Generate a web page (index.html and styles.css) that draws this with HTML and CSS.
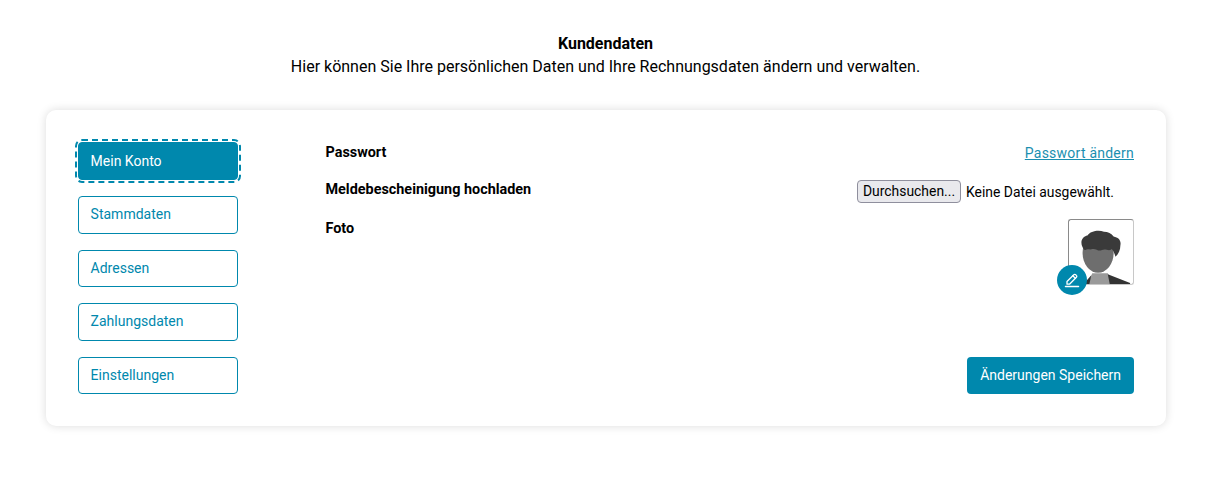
FILE: index.html
```html
<!DOCTYPE html>
<html lang="de">
<head>
<meta charset="utf-8">
<title>Kundendaten</title>
<link rel="stylesheet" href="styles.css">
</head>
<body>
<header class="intro">
  <h1 class="intro-title">Kundendaten</h1>
  <p class="intro-text">Hier können Sie Ihre persönlichen Daten und Ihre Rechnungsdaten ändern und verwalten.</p>
</header>
<main class="card">
  <nav class="side">
    <a class="side-item active" href="#">Mein Konto</a>
    <a class="side-item" href="#">Stammdaten</a>
    <a class="side-item" href="#">Adressen</a>
    <a class="side-item" href="#">Zahlungsdaten</a>
    <a class="side-item" href="#">Einstellungen</a>
  </nav>
  <section class="content">
    <div class="rows">
      <div class="row row-pass">
        <span class="label">Passwort</span>
        <a class="link" href="#">Passwort ändern</a>
      </div>
      <div class="row row-file">
        <span class="label">Meldebescheinigung hochladen</span>
        <div class="file">
          <button class="file-btn" type="button">Durchsuchen...</button>
          <span class="file-text">Keine Datei ausgewählt.</span>
        </div>
      </div>
      <div class="row row-photo">
        <span class="label">Foto</span>
        <div class="avatar">
          <svg class="avatar-img" viewBox="0 0 66 66" width="66" height="66" aria-hidden="true">
            <g class="avatar-art">
              <path d="M19 66 L24 55 H40 L44 66 Z" fill="#9a9a9a"/>
              <path d="M15 66 L23 57 L21 66 Z M42 66 L40 56 L63 65 L63 66 Z" fill="#333"/>
              <ellipse cx="30" cy="34" rx="16" ry="20.500" fill="#6e6e6e"/>
              <path d="M14 28 C11 22 14 17 19 16 C22 11 31 10 36 12 C40 12 44 14 46 17 C51 18 54 21 53 26 C53 31 51 35 48 38 C47 35 46 32 44 30 C41 33 38 29 34 31 C30 33 28 29 24 30 C21 31 19 29 17 31 C16 31 15 30 14 28 Z" fill="#3a3a3a"/>
            </g>
          </svg>
          <span class="avatar-edit">
            <svg viewBox="0 0 16 16" width="16" height="16" fill="none" stroke="#fff" stroke-width="1.300" stroke-linejoin="round" stroke-linecap="round" aria-hidden="true">
              <path d="M3 9.500 L9.800 2.700 a1.300 1.300 0 0 1 1.900 0 l0.700 0.700 a1.300 1.300 0 0 1 0 1.900 L5.500 12.200 H3 Z"/>
              <path d="M8.800 3.800 L11.300 6.300"/>
              <path d="M1.500 14.500 H14.500" stroke-width="1.500"/>
            </svg>
          </span>
        </div>
      </div>
    </div>
    <div class="actions">
      <button class="save" type="button">Änderungen Speichern</button>
    </div>
  </section>
</main>
</body>
</html>
```
FILE: styles.css
```css
* { box-sizing: border-box; }
html, body { margin: 0; padding: 0; }
body {
  width: 1217px;
  height: 483px;
  overflow: hidden;
  background: #fff;
  color: #000;
  font-family: Roboto, "Liberation Sans", sans-serif;
  font-size: 16px;
  line-height: 24px;
}
.intro {
  padding-top: 32px;
  text-align: center;
  height: 110px;
  padding-right: 6px;
}
.intro-title { margin: 0; font-size: 16px; font-weight: 700; line-height: 23px; }
.intro-text { margin: 0; font-size: 16px; line-height: 23px; }
.card {
  width: 1120px;
  height: 316.4px;
  margin-left: 46px;
  padding: 32.400px 32px 32px;
  display: flex;
  background: #fff;
  border-radius: 10px;
  box-shadow: 0 0 10px rgba(0, 0, 0, 0.14);
}
.side {
  width: 160px;
  flex: none;
  display: flex;
  flex-direction: column;
  gap: 16px;
}
.side-item {
  height: 37.6px;
  display: flex;
  align-items: center;
  padding: 0 11.600px 1px;
  border: 1px solid #0088ad;
  border-radius: 4px;
  color: #0088ad;
  font-size: 14px;
  text-decoration: none;
}
.side-item.active {
  background: #0088ad;
  color: #fff;
  outline: 2px dashed #0088ad;
  outline-offset: 1px;
}
.content {
  margin-left: 87.5px;
  padding-top: 0.600px;
  flex: 1;
  display: flex;
  flex-direction: column;
  justify-content: space-between;
  min-width: 0;
}
.row { display: flex; justify-content: space-between; align-items: flex-start; }
.row-pass { height: 37px; }
.row-file { height: 39px; }
.label { font-size: 14.4px; font-weight: 700; line-height: 20px; }
.link { font-size: 14px; line-height: 20px; color: #1a8fb0; letter-spacing: 0.24px; }
.file { display: flex; align-items: center; width: 277px; font-size: 13.9px; }
.file-btn {
  height: 23px;
  padding: 0 5px;
  background: #e9e9ed;
  border: 1px solid #8f8f9d;
  border-radius: 4px;
  color: #000;
  font: 13.9px/1 Roboto, "Liberation Sans", sans-serif;
}
.file-text { margin-left: 5px; }
.avatar { position: relative; width: 66px; height: 66px; }
.avatar-img {
  display: block;
  border: 1px solid #8a8a8a;
  border-radius: 3px;
  border-right-color: #c8c8c8;
  border-bottom-color: #c8c8c8;
}
.avatar-art { filter: blur(0.5px); }
.avatar-edit {
  position: absolute;
  left: -11px;
  bottom: -10px;
  width: 30px;
  height: 30px;
  display: flex;
  align-items: center;
  justify-content: center;
  border-radius: 50%;
  background: #0088ad;
}
.actions { display: flex; justify-content: flex-end; }
.save {
  height: 37.6px;
  padding: 0 13px 1px;
  border: 0;
  border-radius: 4px;
  background: #0088ad;
  color: #fff;
  font: 14px Roboto, "Liberation Sans", sans-serif;
}
```
